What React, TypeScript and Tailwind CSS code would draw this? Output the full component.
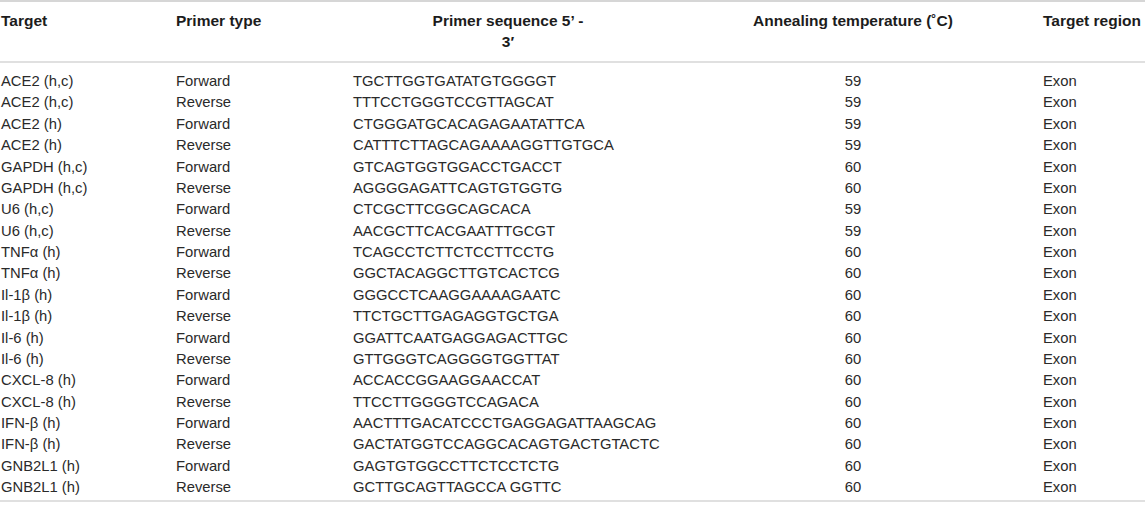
const rows = [
  ["ACE2 (h,c)", "Forward", "TGCTTGGTGATATGTGGGGT", "59", "Exon"],
  ["ACE2 (h,c)", "Reverse", "TTTCCTGGGTCCGTTAGCAT", "59", "Exon"],
  ["ACE2 (h)", "Forward", "CTGGGATGCACAGAGAATATTCA", "59", "Exon"],
  ["ACE2 (h)", "Reverse", "CATTTCTTAGCAGAAAAGGTTGTGCA", "59", "Exon"],
  ["GAPDH (h,c)", "Forward", "GTCAGTGGTGGACCTGACCT", "60", "Exon"],
  ["GAPDH (h,c)", "Reverse", "AGGGGAGATTCAGTGTGGTG", "60", "Exon"],
  ["U6 (h,c)", "Forward", "CTCGCTTCGGCAGCACA", "59", "Exon"],
  ["U6 (h,c)", "Reverse", "AACGCTTCACGAATTTGCGT", "59", "Exon"],
  ["TNFα (h)", "Forward", "TCAGCCTCTTCTCCTTCCTG", "60", "Exon"],
  ["TNFα (h)", "Reverse", "GGCTACAGGCTTGTCACTCG", "60", "Exon"],
  ["Il-1β (h)", "Forward", "GGGCCTCAAGGAAAAGAATC", "60", "Exon"],
  ["Il-1β (h)", "Reverse", "TTCTGCTTGAGAGGTGCTGA", "60", "Exon"],
  ["Il-6 (h)", "Forward", "GGATTCAATGAGGAGACTTGC", "60", "Exon"],
  ["Il-6 (h)", "Reverse", "GTTGGGTCAGGGGTGGTTAT", "60", "Exon"],
  ["CXCL-8 (h)", "Forward", "ACCACCGGAAGGAACCAT", "60", "Exon"],
  ["CXCL-8 (h)", "Reverse", "TTCCTTGGGGTCCAGACA", "60", "Exon"],
  ["IFN-β (h)", "Forward", "AACTTTGACATCCCTGAGGAGATTAAGCAG", "60", "Exon"],
  ["IFN-β (h)", "Reverse", "GACTATGGTCCAGGCACAGTGACTGTACTC", "60", "Exon"],
  ["GNB2L1 (h)", "Forward", "GAGTGTGGCCTTCTCCTCTG", "60", "Exon"],
  ["GNB2L1 (h)", "Reverse", "GCTTGCAGTTAGCCA GGTTC", "60", "Exon"],
]

const cols = "grid grid-cols-[176px_177px_310px_380px_102px]"

export default function App() {
  return (
    <div className="w-[1145px] h-[508px] bg-white font-['Liberation_Sans',Arial,sans-serif] text-[#2a2a2a]">
      <div className="border-t-2 border-[#d6d6d6]">
        <div className={`${cols} pt-[8px] pb-[9px] text-[15.5px] leading-[21px] font-bold text-[#1c1c1c] border-b-2 border-[#e0e0e0]`}>
          <div className="pl-[1px]">Target</div>
          <div>Primer type</div>
          <div className="text-center">Primer sequence 5’ -<br />3′</div>
          <div className="text-center">Annealing temperature (˚C)</div>
          <div className="whitespace-nowrap">Target region</div>
        </div>
        <div className="pt-[8px] pb-[1px] border-b-2 border-[#e0e0e0] text-[14.8px] leading-[21.37px]">
          {rows.map((r, i) => (
            <div key={i} className={cols}>
              <div className="pl-[1px]">{r[0]}</div>
              <div>{r[1]}</div>
              <div className="whitespace-pre">{r[2]}</div>
              <div className="text-center">{r[3]}</div>
              <div>{r[4]}</div>
            </div>
          ))}
        </div>
      </div>
    </div>
  )
}
